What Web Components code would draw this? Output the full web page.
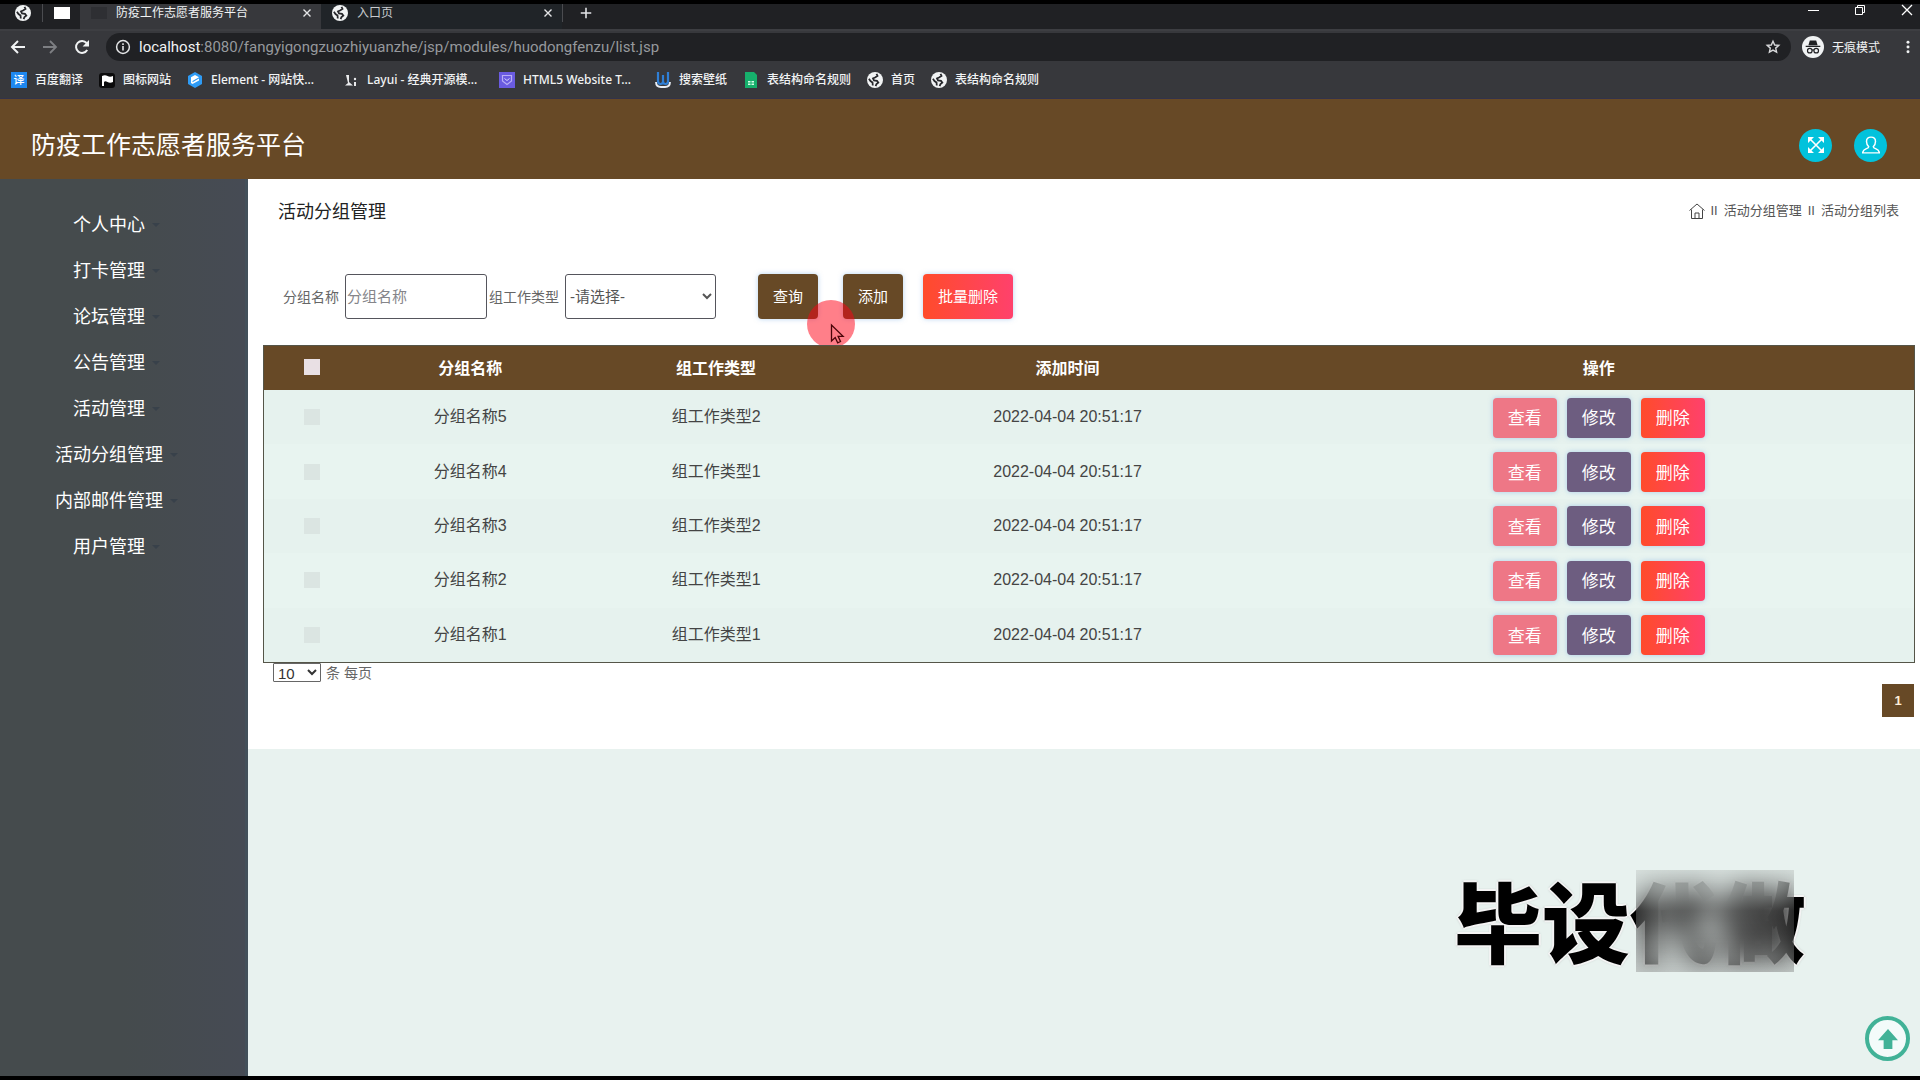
<!DOCTYPE html>
<html lang="zh-CN">
<head>
<meta charset="utf-8">
<title>防疫工作志愿者服务平台</title>
<style>
  html, body { margin: 0; height: 100%; }
  body { background: #000; font-family: "Liberation Sans", "Noto Sans CJK SC", sans-serif; color: #333; }
</style>
</head>
<body>
<volunteer-desktop></volunteer-desktop>

<script>
const define = (name, markup, setup) => {
  const template = document.createElement('template');
  template.innerHTML = '<style>:host, * { box-sizing: border-box; }</style>' + markup;
  customElements.define(name, class extends HTMLElement {
    constructor() {
      super();
      this.attachShadow({ mode: 'open' }).append(template.content.cloneNode(true));
      if (setup) setup(this, this.shadowRoot);
    }
  });
};

/* ---------- icons ---------- */
const ICONS = {
  globe: '<svg viewBox="0 0 16 16"><circle cx="8" cy="8" r="8" fill="#f1f3f4"/><path d="M9.500 1.800 10.500 4 8 5.500 6 6.500 7 8.500l3 .3 1.300 1.800-1.800 1.400L8.600 14.200M1.900 6.800 3.500 9l2 1.500.3 3" fill="none" stroke="#26272b" stroke-width="1.800"/></svg>',
  page: '<svg viewBox="0 0 16 16"><path d="M0 2h16v12H0z" fill="#fff"/></svg>',
  cross: '<svg viewBox="0 0 16 16"><path d="m4 4 8 8m0-8-8 8" stroke="#e4e5e7" stroke-width="1.600"/></svg>',
  plus: '<svg viewBox="0 0 16 16"><path d="M8 2v12M2 8h12" stroke="#e4e5e7" stroke-width="1.800"/></svg>',
  back: '<svg viewBox="0 0 16 16"><path d="M15 8H2m6-6L2 8l6 6" fill="none" stroke="#f1f3f4" stroke-width="2"/></svg>',
  forward: '<svg viewBox="0 0 16 16"><path d="M1 8h13M8 2l6 6-6 6" fill="none" stroke="#7d7f83" stroke-width="1.800"/></svg>',
  reload: '<svg viewBox="0 0 16 16"><path d="M13.200 11A6 6 0 1 1 12.600 4" fill="none" stroke="#f1f3f4" stroke-width="2"/><path d="M15 1v6.400H8.600z" fill="#f1f3f4"/></svg>',
  info: '<svg viewBox="0 0 16 16"><circle cx="8" cy="8" r="6.400" fill="none" stroke="#e4e5e7" stroke-width="1.500"/><path d="M8 7v4.600M8 4.200v1.700" stroke="#e4e5e7" stroke-width="1.600"/></svg>',
  star: '<svg viewBox="0 0 16 16"><path d="m8 2.200 1.700 3.800 4.100.4-3.100 2.700.9 4.100L8 11.100l-3.600 2.100.9-4.100-3.100-2.700 4.100-.4z" fill="none" stroke="#d8d9db" stroke-width="1.400"/></svg>',
  incognito: '<svg viewBox="0 0 24 24"><circle cx="12" cy="12" r="12" fill="#f1f3f4"/><path d="M8.500 5h7l1.500 5H7zM4 10.500h16V12H4z" fill="#202124"/><g fill="none" stroke="#202124" stroke-width="1.300"><circle cx="8.500" cy="16" r="2.500"/><circle cx="15.500" cy="16" r="2.500"/><path d="M11 15.500q1-.7 2 0"/></g></svg>',
  dots: '<svg viewBox="0 0 16 16" fill="#f1f3f4"><circle cx="8" cy="2.500" r="1.700"/><circle cx="8" cy="8" r="1.700"/><circle cx="8" cy="13.500" r="1.700"/></svg>',
  minimize: '<svg viewBox="0 0 12 12"><path d="M1 6.500h11" stroke="#fff"/></svg>',
  restore: '<svg viewBox="0 0 12 12"><path d="M1.500 3.500h7v7h-7zM3.500 3V1.500h7v7H9" fill="none" stroke="#fff"/></svg>',
  close: '<svg viewBox="0 0 12 12"><path d="m1 1 10 10M11 1 1 11" stroke="#fff" stroke-width="1.300"/></svg>',
  flag: '<svg viewBox="0 0 16 16"><rect y="1" width="16" height="15" rx="3" fill="#0b0b0c"/><path d="M3 14V4q3-1.500 5.500 0T14 4v6q-3 1.500-5.500 0T5 10v4z" fill="#fff"/></svg>',
  element: '<svg viewBox="0 0 16 16"><path d="m8 0 7 4v8l-7 4-7-4V4z" fill="#2e9bf5"/><path d="m8 3 4 2.300L5.500 9v1.200L12 6.500v2L5.500 12 4 11V5.300z" fill="#fff"/></svg>',
  layui: '<svg viewBox="0 0 16 16"><path d="M3 3h3v7l4 3.500H2L5 11z" fill="#e9eaec"/><circle cx="12" cy="7" r="1.200" fill="#e9eaec"/><path d="M11 10h2v4h-2z" fill="#e9eaec"/></svg>',
  html: '<svg viewBox="0 0 16 16"><path d="M0 0h16v16H0z" fill="#6a5be0"/><path d="M3.500 3.500h9V9L8 12.500 3.500 9z" fill="none" stroke="#b9aef5" stroke-width="1.200"/><path d="M5.500 6.500 8 8.500l2.500-2" fill="none" stroke="#d9d2ff"/></svg>',
  wall: '<svg viewBox="0 0 16 16"><path d="M3 0v9q0 3 2.500 3T8 9.500V3m0 6q0 3 2.500 3T13 9.500V0" fill="none" stroke="#2f7fd6" stroke-width="2.200"/><path d="M1 10q0 5 5 5h4q5 0 5-5" fill="none" stroke="#e9eef5" stroke-width="1.800"/></svg>',
  sheet: '<svg viewBox="0 0 16 16"><path d="M2 0h9l3 3v13H2z" fill="#16b06c"/><path d="M5 9h2.500v1.500H5zM8.500 9H11v1.500H8.500zM5 11.500h2.500V13H5zM8.500 11.500H11V13H8.500z" fill="#d6ffe9"/></svg>',
  expand: '<svg viewBox="0 0 16 16"><path d="m2 2 12 12m0-12L2 14" stroke="#fff" stroke-width="1.600"/><path d="M0 0h6L0 6zM16 0v6l-6-6zM16 16h-6l6-6zM0 16v-6l6 6z" fill="#fff"/></svg>',
  user: '<svg viewBox="0 0 16 16"><path d="M6 9.500Q4 7.500 4 4.800 4 1 8 1t4 3.800Q12 7.500 10 9.500q0 1 2.500 2T15.500 15H.5q.5-2.500 3-3.500T6 9.500z" fill="none" stroke="#fff" stroke-width="1.300" stroke-linejoin="round"/></svg>',
  home: '<svg viewBox="0 0 16 16"><path d="M.5 7.500 8 1l7.500 6.500M2.500 6.500v9h11v-9M6 15.500V10h4v5.500" fill="none" stroke="#444"/></svg>',
  arrow: '<svg viewBox="0 0 16 16"><path d="m8 0 8 9h-4.500v7h-7V9H0z" fill="#41b297"/></svg>'
};
define('ui-icon', `
  <style>
    :host { display: inline-flex; flex: none; width: 16px; height: 16px; }
    :host([name="incognito"]) { width: 22px; height: 22px; }
    svg { display: block; width: 100%; height: 100%; }
  </style><span hidden></span>`);
const paintIcons = root => root.querySelectorAll('ui-icon').forEach(icon => {
  const t = document.createElement('template');
  t.innerHTML = ICONS[icon.getAttribute('name')] || '';
  icon.shadowRoot.querySelector('span').replaceWith(t.content);
});

/* ---------- browser frame ---------- */
define('browser-tab', `
  <style>
    :host { display: flex; align-items: center; width: 241px; gap: 9px; padding: 0 7px 7px 11px; font-size: 12px; color: #c8cacd; background: #202428; }
    :host([active]) { color: #f1f3f4; background: #37383c; }
    .name { flex: 1; line-height: 16px; white-space: nowrap; }
    button { display: flex; border: 0; padding: 0; background: none; }
    .blank { width: 16px; height: 12px; background: #2e2f33; }
    ui-icon { width: 14px; height: 14px; }
  </style>
  <slot name="icon"><span class="blank"></span></slot><span class="name"><slot></slot></span>
  <button aria-label="关闭"><ui-icon name="cross"></ui-icon></button>`, (host, root) => paintIcons(root));

define('bookmark-link', `
  <style>
    :host { display: block; }
    a { display: flex; align-items: center; gap: 8px; font-size: 12px; font-weight: 500; line-height: 20px; color: #f1f3f4; text-decoration: none; white-space: nowrap; }
    :host([long]) .text { width: 116px; }
  </style>
  <a href="#"><slot name="icon"></slot><span class="text"><slot></slot></span></a>`);

define('browser-frame', `
  <style>
    :host { display: block; flex: none; background: #37383c; font-family: "Noto Sans", "Noto Sans CJK SC", sans-serif; }
    ui-icon { display: flex; }
    button { display: flex; align-items: center; justify-content: center; border: 0; padding: 0; background: none; color: inherit; font: inherit; }
    .strip { display: flex; height: 25px; background: #202124; }
    .pinned { display: flex; align-items: center; width: 80px; padding: 0 0 8px 15px; gap: 11px; }
    .pinned ui-icon { width: 16px; height: 16px; }
    .bar { width: 1px; height: 18px; background: #4b4c50; }
    .new { width: 46px; padding-bottom: 8px; }
    .new ui-icon { width: 14px; height: 14px; }
    .windows { display: flex; margin-left: auto; gap: 35px; padding: 0 7px 14px 0; }
    .windows ui-icon { width: 12px; height: 12px; }
    .tools { display: flex; align-items: center; height: 34px; padding: 0; padding-left: 10px; border-top: 2px solid #3d3e42; }
    .tools > .nav { width: 32px; justify-content: flex-start; }
    .address { display: flex; align-items: center; flex: 1; height: 28px; border-radius: 14px; background: #202124; padding: 0 10px 0 9px; gap: 8px; }
    .url { flex: 1; font-family: Roboto, sans-serif; font-size: 15px; line-height: 20px; color: #96999d; }
    .url b { font-weight: 400; color: #f1f3f4; }
    .private { padding: 0 8px 0 11px; gap: 8px; font-size: 12px; color: #f1f3f4; height: 26px; }
    .more { width: 24px; margin-left: 8px; }
    .more ui-icon { width: 14px; height: 14px; }
    .marks { display: flex; align-items: center; gap: 16px; height: 36px; padding: 0 11px 1px; border-bottom: 1px solid #33334a; }
    .tr { display: grid; place-items: center; width: 16px; height: 16px; background: #1e88f0; color: #fff; font-size: 11px; line-height: 16px; }
  </style>
  <div class="strip">
    <div class="pinned"><ui-icon name="globe"></ui-icon><span class="bar"></span><ui-icon name="page"></ui-icon></div>
    <browser-tab active>防疫工作志愿者服务平台</browser-tab>
    <browser-tab><ui-icon slot="icon" name="globe"></ui-icon>入口页</browser-tab>
    <span class="bar"></span>
    <button class="new" aria-label="新标签页"><ui-icon name="plus"></ui-icon></button>
    <div class="windows">
      <button aria-label="最小化"><ui-icon name="minimize"></ui-icon></button>
      <button aria-label="还原"><ui-icon name="restore"></ui-icon></button>
      <button aria-label="关闭窗口"><ui-icon name="close"></ui-icon></button>
    </div>
  </div>
  <div class="tools">
    <button class="nav" aria-label="后退"><ui-icon name="back"></ui-icon></button>
    <button class="nav" aria-label="前进"><ui-icon name="forward"></ui-icon></button>
    <button class="nav" aria-label="刷新"><ui-icon name="reload"></ui-icon></button>
    <div class="address">
      <ui-icon name="info"></ui-icon>
      <span class="url"><b>localhost</b>:8080/fangyigongzuozhiyuanzhe/jsp/modules/huodongfenzu/list.jsp</span>
      <button aria-label="收藏"><ui-icon name="star"></ui-icon></button>
    </div>
    <button class="private"><ui-icon name="incognito"></ui-icon>无痕模式</button>
    <button class="more" aria-label="菜单"><ui-icon name="dots"></ui-icon></button>
  </div>
  <div class="marks">
    <bookmark-link><span slot="icon" class="tr">译</span>百度翻译</bookmark-link>
    <bookmark-link><ui-icon slot="icon" name="flag"></ui-icon>图标网站</bookmark-link>
    <bookmark-link long><ui-icon slot="icon" name="element"></ui-icon>Element - 网站快...</bookmark-link>
    <bookmark-link long><ui-icon slot="icon" name="layui"></ui-icon>Layui - 经典开源模...</bookmark-link>
    <bookmark-link long><ui-icon slot="icon" name="html"></ui-icon>HTML5 Website T...</bookmark-link>
    <bookmark-link><ui-icon slot="icon" name="wall"></ui-icon>搜索壁纸</bookmark-link>
    <bookmark-link><ui-icon slot="icon" name="sheet"></ui-icon>表结构命名规则</bookmark-link>
    <bookmark-link><ui-icon slot="icon" name="globe"></ui-icon>首页</bookmark-link>
    <bookmark-link><ui-icon slot="icon" name="globe"></ui-icon>表结构命名规则</bookmark-link>
  </div>`, (host, root) => paintIcons(root));

/* ---------- application header and menu ---------- */
define('app-header', `
  <style>
    :host { display: flex; flex: none; align-items: center; justify-content: space-between; height: 80px; padding: 12px 33px 0 31px; background: #674926; }
    h1 { margin: 0; font-size: 25px; line-height: 34px; font-weight: 400; color: #fff; }
    nav { display: flex; gap: 22px; }
    button { display: grid; place-items: center; width: 33px; height: 33px; padding: 0; border: 0; border-radius: 50%; background: #02c2dc; }
    .user { width: 18px; height: 18px; }
  </style>
  <h1>防疫工作志愿者服务平台</h1>
  <nav>
    <button aria-label="全屏"><ui-icon name="expand"></ui-icon></button>
    <button aria-label="用户"><ui-icon class="user" name="user"></ui-icon></button>
  </nav>`, (host, root) => paintIcons(root));

define('menu-item', `
  <style>
    :host { display: flex; justify-content: center; }
    a { position: relative; font-size: 18px; line-height: 46px; color: #fff; text-decoration: none; }
    a::after { content: ""; position: absolute; left: calc(100% + 7px); top: 21px; border: 4px solid transparent; border-top-color: #38414a; border-bottom: 0; }
  </style>
  <a href="#"><slot></slot></a>`);

define('side-menu', `
  <style>
    :host { display: block; flex: none; width: 248px; padding: 23px 27px 0 0; background: linear-gradient(90deg, #454b4d, #454b4d 50%, #464b54); border-right: 3px solid #43505a; }
    nav { display: flex; flex-direction: column; }
  </style>
  <nav>
    <menu-item>个人中心</menu-item><menu-item>打卡管理</menu-item><menu-item>论坛管理</menu-item><menu-item>公告管理</menu-item>
    <menu-item>活动管理</menu-item><menu-item>活动分组管理</menu-item><menu-item>内部邮件管理</menu-item><menu-item>用户管理</menu-item>
  </nav>`);

/* ---------- page content ---------- */
define('page-heading', `
  <style>
    :host { display: flex; align-items: center; justify-content: space-between; height: 66px; padding: 0 21px 0 30px; }
    h2 { margin: 0; font-size: 18px; line-height: 26px; font-weight: 400; color: #222; }
    nav { display: flex; align-items: center; gap: 6px; font-size: 13px; line-height: 20px; color: #555; padding-bottom: 2px; }
    a { color: inherit; text-decoration: none; display: flex; }
  </style>
  <h2>活动分组管理</h2>
  <nav><a href="#" aria-label="首页"><ui-icon name="home"></ui-icon></a><span>II</span><a href="#">活动分组管理</a><span>II</span><a href="#">活动分组列表</a></nav>`,
  (host, root) => paintIcons(root));

define('action-button', `
  <style>
    :host { display: inline-flex; --fill: #674926; }
    :host([kind="view"]) { --fill: #ee7786; }
    :host([kind="edit"]) { --fill: #6d5d80; }
    :host([kind="delete"]) { --fill: linear-gradient(90deg, #ff4b2b, #ff416c); }
    button { height: 40px; padding: 0 15px 2px; border: 0; border-radius: 4px; background: var(--fill); color: #fff; font: 17px "Liberation Sans", "Noto Sans CJK SC", sans-serif; box-shadow: 0 0 5px rgba(110, 170, 230, .5); }
    :host([tall]) button { height: 45px; font-size: 15px; }
  </style>
  <button type="button"><slot></slot></button>`);

define('search-bar', `
  <style>
    :host { display: block; }
    form { display: flex; align-items: center; margin: 0; padding: 29px 0 26px 35px; font-size: 14px; color: #666; }
    label { padding-bottom: 2px; }
    input, select { height: 45px; border: 1px solid #55555c; border-radius: 3px; background: #fff; font: 15px "Liberation Sans", "Noto Sans CJK SC", sans-serif; color: #555; }
    input { width: 142px; padding: 0 1px; margin: 0 2px 0 6px; }
    input::placeholder { color: #85858a; opacity: 1; }
    select { width: 151px; padding: 0; margin: 0 42px 0 6px; }
    action-button { margin-right: 25px; }
    action-button + action-button { margin-right: 20px; }
  </style>
  <form>
    <label for="name">分组名称</label><input id="name" type="text" placeholder="分组名称">
    <label for="kind">组工作类型</label><select id="kind"><option>-请选择-</option></select>
    <action-button tall>查询</action-button><action-button tall>添加</action-button><action-button tall kind="delete">批量删除</action-button>
  </form>`);

define('group-table', `
  <style>
    :host { display: block; }
    table { width: 100%; height: 318px; table-layout: fixed; border-collapse: separate; border-spacing: 0; border: 1px solid #555548; background: #e8f4f0; font-size: 16px; color: #444; }
    th { height: 44px; padding: 0 0 3px; background: #674926; color: #fff; font-weight: 700; }
    td { height: 54px; padding: 0; text-align: center; line-height: 24px; }
    tbody tr:nth-child(odd) { background: #e6f2ee; }
    input { appearance: none; display: block; width: 16px; height: 16px; margin: 0 auto; background: #dbe5e2; }
    th input { background: #e9e0e4; }
    .ops { display: flex; justify-content: center; gap: 10px; padding-top: 1px; }
    .check { width: 5.8%; } .name { width: 13.4%; } .type { width: 16.4%; } .time { width: 26.2%; }
  </style>
  <table>
    <colgroup><col class="check"><col class="name"><col class="type"><col class="time"><col></colgroup>
    <thead><tr><th><input type="checkbox" aria-label="全选"></th><th>分组名称</th><th>组工作类型</th><th>添加时间</th><th>操作</th></tr></thead>
    <tbody></tbody>
  </table>`, (host, root) => {
  const rows = [[5, 2], [4, 1], [3, 2], [2, 1], [1, 1]];
  root.querySelector('tbody').innerHTML = rows.map(([n, t]) => `
    <tr><td><input type="checkbox" aria-label="选择分组名称${n}"></td><td>分组名称${n}</td><td>组工作类型${t}</td><td>2022-04-04 20:51:17</td>
    <td><div class="ops"><action-button kind="view">查看</action-button><action-button kind="edit">修改</action-button><action-button kind="delete">删除</action-button></div></td></tr>`).join('');
});

define('page-controls', `
  <style>
    :host { display: flex; flex-direction: column; padding: 0 1px 32px 10px; }
    label { display: flex; align-items: center; gap: 5px; height: 19px; font-size: 14px; line-height: 18px; color: #666; }
    select { width: 48px; height: 19px; padding: 0; border: 1px solid #666; border-radius: 1px; background: #fff; color: #333; font: 15px "Liberation Sans", sans-serif; }
    button { align-self: flex-end; width: 32px; height: 33px; margin-top: 2px; padding: 0; border: 0; background: #674926; color: #ffeed8; font: bold 13px "Liberation Sans", sans-serif; }
  </style>
  <label><select aria-label="每页条数"><option>10</option></select>条 每页</label>
  <button type="button">1</button>`);

/* ---------- things drawn over the page ---------- */
define('pointer-mark', `
  <style>
    :host { position: absolute; left: 807px; top: 300px; width: 48px; height: 45px; overflow: hidden; pointer-events: none; }
    svg { display: block; }
  </style>
  <svg width="48" height="48" viewBox="0 0 48 48"><circle cx="24" cy="24" r="24" fill="#ff0014" fill-opacity=".5"/><path d="M24.500 25v16l3.700-3.500 2.500 5.300 2.800-1.300-2.400-5.200h5z" fill="#ff7d86" stroke="#4a0508" stroke-width="1.300"/></svg>`);

define('studio-mark', `
  <style>
    :host { position: absolute; right: 111px; bottom: 108px; width: 355px; height: 102px; color: #000; pointer-events: none; }
    .text { font: 900 88px/96px "Noto Sans CJK SC", sans-serif; white-space: nowrap; text-shadow: 2px 0 #f4f4f4, -2px 0 #f4f4f4, 0 2px #f4f4f4, 0 -2px #f4f4f4, 0 0 3px #555; }
    .veil { position: absolute; left: 182px; top: 0; width: 158px; height: 102px; backdrop-filter: blur(14px); background: linear-gradient(rgba(200, 208, 205, .5), rgba(110, 110, 110, .2) 40%, rgba(130, 130, 130, .3)); }
  </style>
  <div class="text">毕设代做</div><div class="veil"></div>`);

define('back-to-top', `
  <style>
    :host { position: absolute; right: 10px; bottom: 19px; }
    button { display: grid; place-items: center; width: 45px; height: 45px; padding: 0; border: 4px solid #41b297; border-radius: 50%; background: #f3fbfa; }
    ui-icon { width: 20px; height: 20px; }
  </style>
  <button aria-label="返回顶部"><ui-icon name="arrow"></ui-icon></button>`, (host, root) => paintIcons(root));

define('volunteer-desktop', `
  <style>
    :host { position: relative; display: flex; flex-direction: column; min-height: 100vh; padding: 4px 0; }
    .body { display: flex; flex: 1; }
    main { flex: 1; min-width: 0; background: #e8f2ef; }
    .panel { background: #fff; }
    .list { padding: 0 5px 0 15px; }
  </style>
  <browser-frame></browser-frame>
  <app-header></app-header>
  <div class="body">
    <side-menu></side-menu>
    <main>
      <section class="panel">
        <page-heading></page-heading>
        <search-bar></search-bar>
        <div class="list"><group-table></group-table><page-controls></page-controls></div>
      </section>
    </main>
  </div>
  <pointer-mark></pointer-mark>
  <studio-mark></studio-mark>
  <back-to-top></back-to-top>`);
</script>
</body>
</html>
